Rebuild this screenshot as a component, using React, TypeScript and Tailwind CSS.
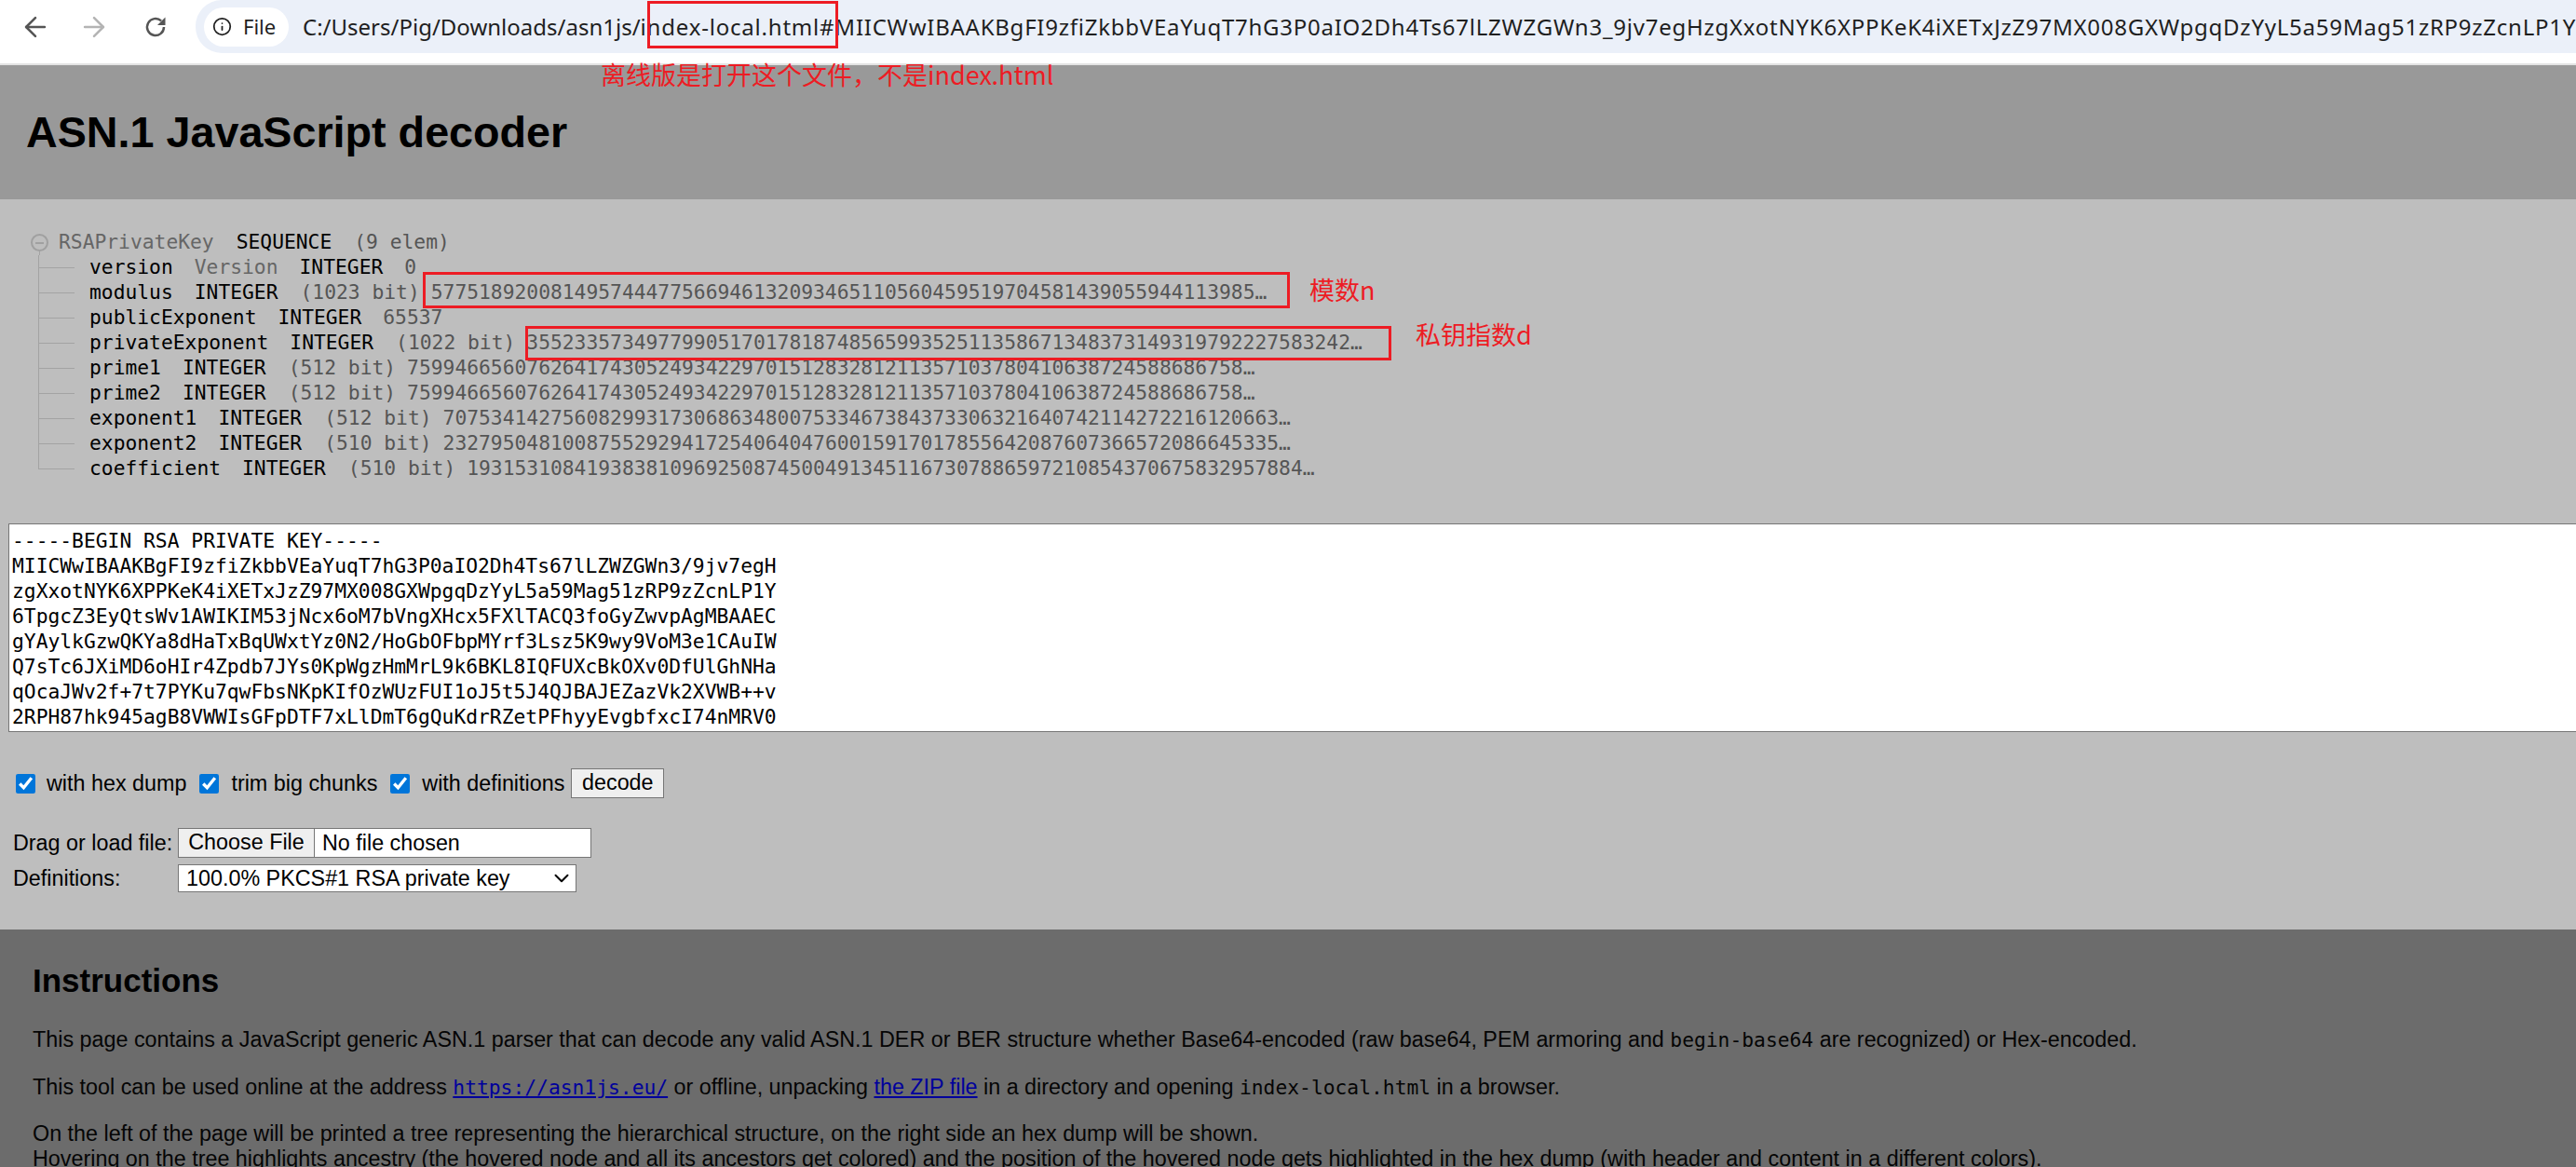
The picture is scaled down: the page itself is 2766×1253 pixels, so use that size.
import React from 'react'
import { ArrowLeft, ArrowRight, ChevronDown, Info } from 'lucide-react'

const urlDir = 'C:/Users/Pig/Downloads/asn1js/'
const urlFile = 'index-local.html'
const urlHash =
    '#MIICWwIBAAKBgFI9zfiZkbbVEaYuqT7hG3P0aIO2Dh4Ts67lLZWZGWn3_9jv7egHzgXxotNYK6XPPKeK4iXETxJzZ97MX008GXWpgqDzYyL5a59Mag51zRP9zZcnLP1Y6T'

const pem = `-----BEGIN RSA PRIVATE KEY-----
MIICWwIBAAKBgFI9zfiZkbbVEaYuqT7hG3P0aIO2Dh4Ts67lLZWZGWn3/9jv7egH
zgXxotNYK6XPPKeK4iXETxJzZ97MX008GXWpgqDzYyL5a59Mag51zRP9zZcnLP1Y
6TpgcZ3EyQtsWv1AWIKIM53jNcx6oM7bVngXHcx5FXlTACQ3foGyZwvpAgMBAAEC
gYAylkGzwQKYa8dHaTxBqUWxtYz0N2/HoGbOFbpMYrf3Lsz5K9wy9VoM3e1CAuIW
Q7sTc6JXiMD6oHIr4Zpdb7JYs0KpWgzHmMrL9k6BKL8IQFUXcBkOXv0DfUlGhNHa
qOcaJWv2f+7t7PYKu7qwFbsNKpKIfOzWUzFUI1oJ5t5J4QJBAJEZazVk2XVWB++v
2RPH87hk945agB8VWWIsGFpDTF7xLlDmT6gQuKdrRZetPFhyyEvgbfxcI74nMRV0`

interface Row {
    name: string
    alias?: string
    len?: string
    value: string
}

const rows: Row[] = [
    { name: 'version', alias: 'Version', value: '0' },
    { name: 'modulus', len: '(1023 bit)', value: '577518920081495744477566946132093465110560459519704581439055944113985…' },
    { name: 'publicExponent', value: '65537' },
    { name: 'privateExponent', len: '(1022 bit)', value: '355233573497799051701781874856599352511358671348373149319792227583242…' },
    { name: 'prime1', len: '(512 bit)', value: '7599466560762641743052493422970151283281211357103780410638724588686758…' },
    { name: 'prime2', len: '(512 bit)', value: '7599466560762641743052493422970151283281211357103780410638724588686758…' },
    { name: 'exponent1', len: '(512 bit)', value: '7075341427560829931730686348007533467384373306321640742114272216120663…' },
    { name: 'exponent2', len: '(510 bit)', value: '2327950481008755292941725406404760015917017855642087607366572086645335…' },
    { name: 'coefficient', len: '(510 bit)', value: '1931531084193838109692508745004913451167307886597210854370675832957884…' },
]

const mono = "font-['DejaVu_Sans_Mono','Liberation_Mono',monospace] text-[21.3px]"
const code = "font-['DejaVu_Sans_Mono','Liberation_Mono',monospace] text-[21.3px] leading-none"
const cjk = "font-['Noto_Sans_CJK_SC','Liberation_Sans',sans-serif] text-[27px] leading-none text-[#ed1c24]"

const TreeRow = ({ row, last }: { row: Row; last: boolean }) => (
    <div className="flex h-[27px] items-center whitespace-pre">
        <span className={`h-[27px] w-[39px] ${last ? '' : 'border-l border-[#a3a3a3]'}`}>
            <span className={`block h-[14px] border-b border-[#a3a3a3] ${last ? 'border-l' : ''}`} />
        </span>
        <span className="flex pb-[2px]">
            <span className="ml-[16px] text-black">{row.name}</span>
            {row.alias && <span className="ml-[23px] text-[#666]">{row.alias}</span>}
            <span className="ml-[23px] text-black">INTEGER</span>
            {row.len && <span className="ml-[24px] text-[#555]">{row.len}</span>}
            <span className={`${row.len ? 'ml-[12px]' : 'ml-[23px]'} text-[#555]`}>{row.value}</span>
        </span>
    </div>
)

const ReloadIcon = () => (
    <svg width="26" height="26" viewBox="0 0 26 26" fill="none" className="ml-[36px] text-[#555]">
        <path d="M22 13a9 9 0 1 1-2.9-6.6" stroke="currentColor" strokeWidth="2.5" />
        <path d="M23.5 2.5v8.5H15z" fill="currentColor" />
    </svg>
)

export default function App() {
    return (
        <div className="relative h-[1253px] w-full overflow-hidden bg-[#6c6c6c] font-['Liberation_Sans',Arial,sans-serif]">
            <div className="flex h-[70px] border-b-2 border-[#e3e3e3] bg-white">
                <div className="flex h-[57px] w-[210px] shrink-0 items-center pl-[21px]">
                    <ArrowLeft size={34} strokeWidth={1.8} className="text-[#555]" />
                    <ArrowRight size={34} strokeWidth={1.8} className="ml-[29px] text-[#b4b4b4]" />
                    <ReloadIcon />
                </div>
                <div className="flex h-[57px] min-w-0 flex-1 items-center rounded-l-[28px] bg-[#ebf0f9] pl-[9px]">
                    <div className="flex h-[42px] w-[91px] shrink-0 items-center rounded-[21px] bg-white pl-[9px] font-['Noto_Sans',sans-serif] text-[22px] text-[#1f1f1f]">
                        <Info size={21} strokeWidth={2} className="text-[#1f1f1f]" />
                        <span className="ml-[12px]">File</span>
                    </div>
                    <div className="ml-[15px] overflow-hidden whitespace-nowrap font-['Noto_Sans',sans-serif] text-[24px] text-[#1f1f1f]">
                        {urlDir}
                        <span className="tracking-[0.8px]">{urlFile}</span>
                        <span className="tracking-[0.75px]">{urlHash}</span>
                    </div>
                </div>
            </div>

            <header className="flex h-[144px] items-center bg-[#999999] pl-[28px]">
                <h1 className="text-[46.7px] font-bold text-black">ASN.1 JavaScript decoder</h1>
            </header>

            <main className="overflow-hidden bg-[#bebebe] pb-[40px] pt-[33px]">
                <div className={`${mono} leading-[27px]`}>
                    <div className="flex h-[27px] items-start whitespace-pre pl-[33px]">
                        <span className="flex w-[19px] flex-col items-center pt-[4px]">
                            <span className="flex h-[19px] w-[19px] items-center justify-center rounded-full border-2 border-[#a0a0a0]">
                                <span className="h-[2px] w-[9px] bg-[#a0a0a0]" />
                            </span>
                            <span className="h-[4px] w-px bg-[#a3a3a3]" />
                        </span>
                        <span className="-mt-px flex">
                            <span className="ml-[11px] text-[#666]">RSAPrivateKey</span>
                            <span className="ml-[24px] text-black">SEQUENCE</span>
                            <span className="ml-[24px] text-[#555]">(9 elem)</span>
                        </span>
                    </div>
                    <div className="ml-[41px]">
                        {rows.map((row, i) => (
                            <TreeRow key={row.name} row={row} last={i === rows.length - 1} />
                        ))}
                    </div>
                </div>

                <textarea
                    readOnly
                    value={pem}
                    className={`${mono} ml-[9px] mt-[45px] block h-[224px] w-[2790px] resize-none overflow-hidden border border-[#767676] bg-white px-[3px] pt-[4px] leading-[27px] text-black outline-none`}
                />

                <div className="ml-[17px] mt-[39px] flex h-[32px] items-center text-[23.33px] text-black">
                    <input type="checkbox" checked readOnly className="h-[21px] w-[21px] accent-[#0075d9]" />
                    <label className="ml-[12px]">with hex dump</label>
                    <input type="checkbox" checked readOnly className="ml-[14px] h-[21px] w-[21px] accent-[#0075d9]" />
                    <label className="ml-[13px]">trim big chunks</label>
                    <input type="checkbox" checked readOnly className="ml-[14px] h-[21px] w-[21px] accent-[#0075d9]" />
                    <label className="ml-[13px]">with definitions</label>
                    <button className="ml-[7px] h-[32px] w-[100px] border border-[#767676] bg-[#efefef] pb-[3px] text-[23.33px] leading-[26px] text-black">
                        decode
                    </button>
                </div>

                <div className="ml-[14px] mt-[32px] flex h-[32px] items-center text-[23.33px] text-black">
                    <label className="w-[177px]">Drag or load file:</label>
                    <div className="flex h-[32px] w-[444px] items-center border border-[#767676] bg-white">
                        <button className="h-full w-[146px] border-r border-[#767676] bg-[#efefef] pb-[3px] text-[23.33px] leading-[26px] text-black">
                            Choose File
                        </button>
                        <span className="ml-[8px]">No file chosen</span>
                    </div>
                </div>

                <div className="ml-[14px] mt-[7px] flex h-[30px] items-center text-[23.33px] text-black">
                    <label className="w-[177px]">Definitions:</label>
                    <div className="relative">
                        <select className="block h-[30px] w-[428px] appearance-none border border-[#767676] bg-white pl-[8px] text-[23.33px] leading-[26px] text-black">
                            <option>100.0% PKCS#1 RSA private key</option>
                        </select>
                        <ChevronDown size={26} strokeWidth={1.8} className="pointer-events-none absolute right-[3px] top-[2px] text-black" />
                    </div>
                </div>
            </main>

            <section className="bg-[#6c6c6c] px-[35px] pt-[35px] text-[23.33px] leading-[27px] text-[#050505]">
                <h2 className="h-[40px] text-[35px] font-bold leading-[40px] text-black">Instructions</h2>
                <p className="mt-[30px] whitespace-nowrap">
                    This page contains a JavaScript generic ASN.1 parser that can decode any valid ASN.1 DER or BER structure whether Base64-encoded (raw base64, PEM armoring and <code className={code}>begin-base64</code> are recognized) or Hex-encoded.
                </p>
                <p className="mt-[24px] whitespace-nowrap">
                    This tool can be used online at the address <a href="#" className={`${code} text-[#00009c] underline`}>https://asn1js.eu/</a> or offline, unpacking <a href="#" className="text-[#00009c] underline">the ZIP file</a> in a directory and opening <code className={code}>index-local.html</code> in a browser.
                </p>
                <p className="mt-[23px] whitespace-nowrap">
                    On the left of the page will be printed a tree representing the hierarchical structure, on the right side an hex dump will be shown.
                    <br />
                    Hovering on the tree highlights ancestry (the hovered node and all its ancestors get colored) and the position of the hovered node gets highlighted in the hex dump (with header and content in a different colors).
                </p>
            </section>

            {/* red notes drawn over the screenshot */}
            <div className="absolute left-[695px] top-[1px] h-[51px] w-[205px] border-[3px] border-[#ed1c24]" />
            <div className={`${cjk} absolute left-[645px] top-[66px] whitespace-nowrap`}>离线版是打开这个文件，不是index.html</div>
            <div className="absolute left-[454px] top-[292px] h-[39px] w-[931px] border-[3px] border-[#ed1c24]" />
            <div className={`${cjk} absolute left-[1406px] top-[297px] whitespace-nowrap`}>模数n</div>
            <div className="absolute left-[564px] top-[350px] h-[37px] w-[930px] border-[3px] border-[#ed1c24]" />
            <div className={`${cjk} absolute left-[1520px] top-[345px] whitespace-nowrap`}>私钥指数d</div>
        </div>
    )
}
